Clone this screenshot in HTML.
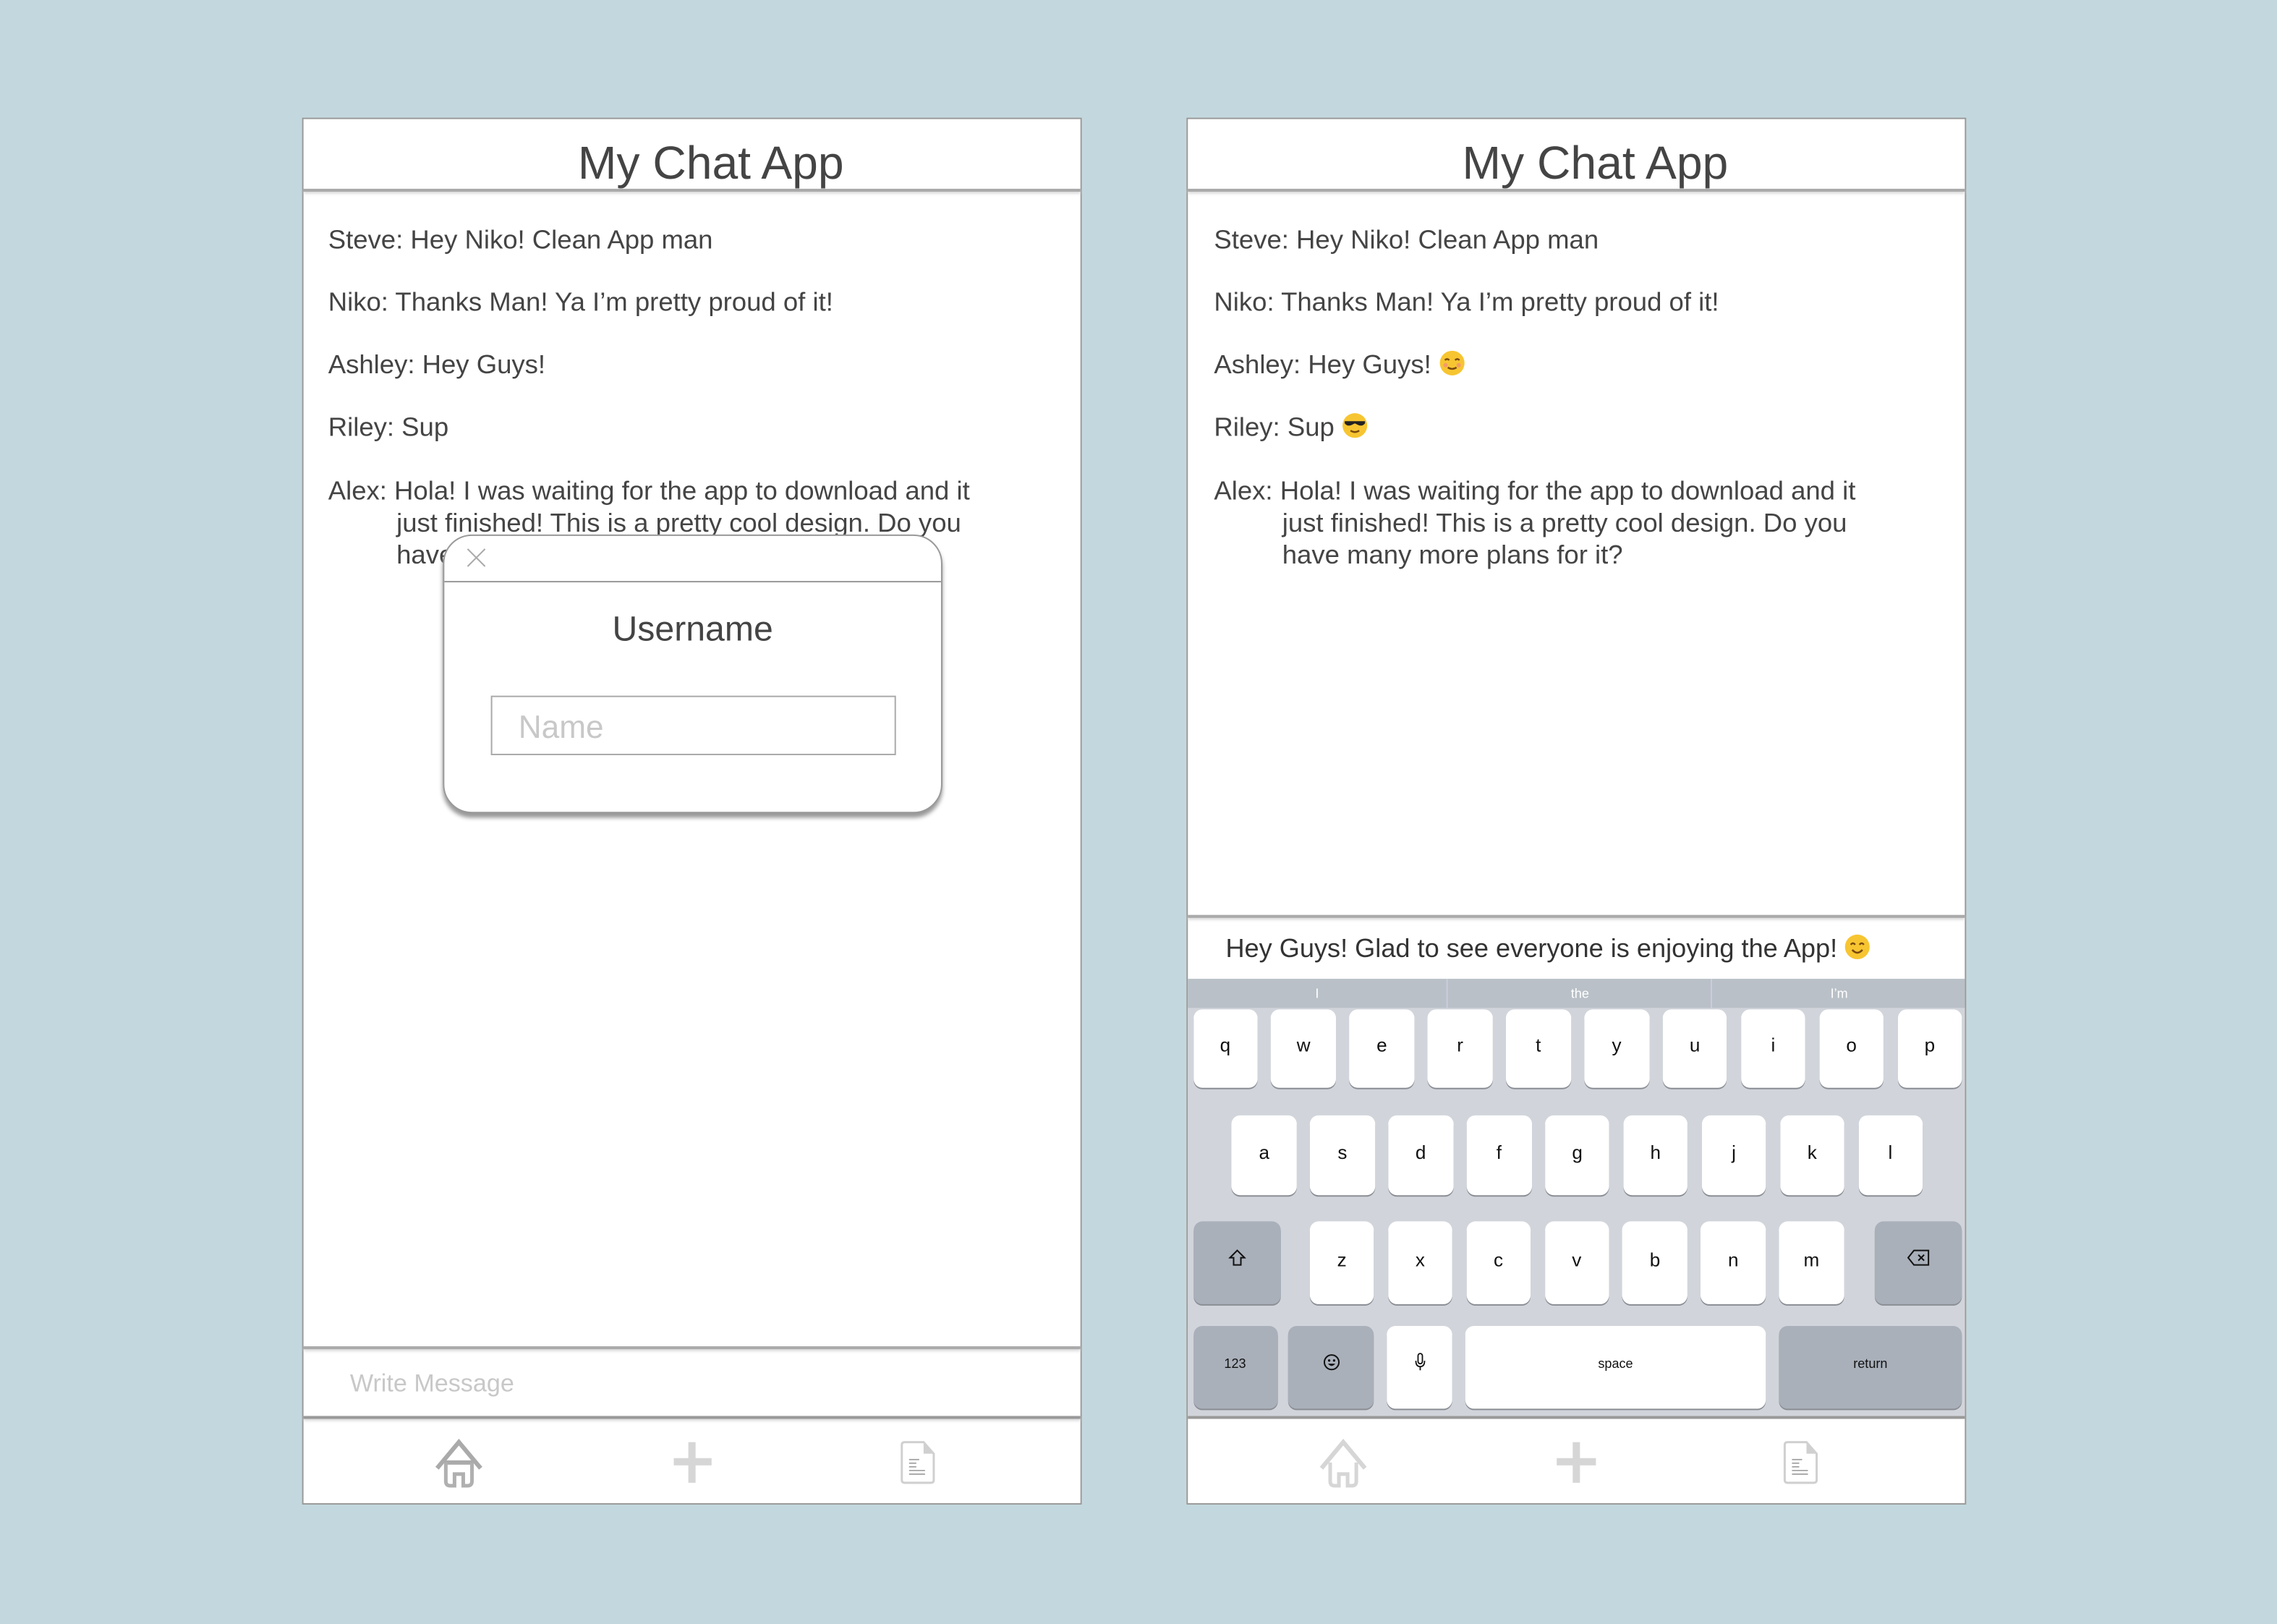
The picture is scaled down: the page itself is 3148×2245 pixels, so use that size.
<!DOCTYPE html>
<html><head><meta charset="utf-8">
<style>
html,body{margin:0;padding:0;background:#c3d8de;overflow:hidden;width:3148px;height:2245px;}
#wrap{position:relative;width:3148px;height:2245px;overflow:hidden;}
#s{position:absolute;left:0;top:0;width:1568px;height:1118px;transform:scale(2.00765);transform-origin:0 0;font-family:"Liberation Sans",sans-serif;color:#444;}
.a{position:absolute;}
.phone{position:absolute;top:81px;width:537px;height:955px;background:#fff;border:1px solid #999;box-sizing:border-box;}
.title{position:absolute;top:12px;left:0;width:100%;text-align:center;font-size:32px;color:#444;padding-left:26px;box-sizing:border-box;}
.hline{position:absolute;left:0;width:100%;height:2px;background:#aaa;box-shadow:0 1px 2px #ccc;}
.msg{position:absolute;left:17px;font-size:18.2px;color:#444;line-height:22px;white-space:nowrap;}
.ind{padding-left:47px;}
.key{position:absolute;background:#fff;border-radius:6px;box-shadow:0 1px 0 #8a8e94;font-size:13px;color:#111;text-align:center;}
.dk{background:#a9b0ba;}
.sug{position:absolute;top:0;height:20px;font-size:9px;color:#fff;text-align:center;line-height:20px;}
</style></head><body>
<div id="wrap">
<div id="s">

<div class="phone" style="left:208px;">
  <div class="title">My Chat App</div>
  <div class="hline" style="top:48px;"></div>
  <div class="msg" style="top:72px;">Steve: Hey Niko! Clean App man</div>
  <div class="msg" style="top:115px;">Niko: Thanks Man! Ya I’m pretty proud of it!</div>
  <div class="msg" style="top:158px;">Ashley: Hey Guys!</div>
  <div class="msg" style="top:201px;">Riley: Sup</div>
  <div class="msg" style="top:245px;">Alex: Hola! I was waiting for the app to download and it<br><span class="ind">just finished! This is a pretty cool design. Do you</span><br><span class="ind">have many more plans for it?</span></div>

  <div class="a" style="left:96px;top:286px;width:344px;height:192px;background:#fff;border:1px solid #999;border-radius:20px;box-shadow:0 3px 3px #999;box-sizing:border-box;">
    <svg class="a" style="left:15px;top:8px" width="14" height="14" viewBox="0 0 14 14"><path d="M1 1L13 13M13 1L1 13" stroke="#aaa" stroke-width="1"/></svg>
    <div class="a" style="left:0;top:31px;width:100%;height:1px;background:#999;"></div>
    <div class="a" style="left:0;top:51px;width:100%;text-align:center;font-size:24px;color:#444;">Username</div>
    <div class="a" style="left:32px;top:110px;width:279px;height:41px;border:1px solid #aaa;box-sizing:border-box;font-size:22px;color:#c8c8c8;line-height:41px;padding-left:18px;">Name</div>
  </div>

  <div class="hline" style="top:845px;"></div>
  <div class="a" style="left:32px;top:861px;font-size:17px;color:#c8c8c8;">Write Message</div>
  <div class="hline" style="top:893px;background:#999;"></div>
  <svg class="a" style="left:90px;top:908px" width="36" height="36" viewBox="0 0 36 36"><path d="M2 21L17 3L32 21" fill="none" stroke="#aaa" stroke-width="3"/><path d="M7 17H27" stroke="#aaa" stroke-width="3"/><path d="M8 17V30Q8 33 11 33H14V25H20V33H23Q26 33 26 30V17" fill="none" stroke="#b0b0b0" stroke-width="2.5"/></svg>
  <div class="a" style="left:255px;top:922px;width:26px;height:5px;background:#d6d6d6;"></div>
  <div class="a" style="left:265px;top:911px;width:5px;height:28px;background:#d6d6d6;"></div>
  <svg class="a" style="left:411px;top:910px" width="24" height="30" viewBox="0 0 24 30"><path d="M3 1H16L23 9V27Q23 29 21 29H3Q1 29 1 27V3Q1 1 3 1Z" fill="#fff" stroke="#d0d0d0" stroke-width="1.5"/><path d="M16 1V9H23Z" fill="#d0d0d0"/><path d="M6 13H13M6 15.5H11M6 18H11M6 20.5H17M6 23H17" stroke="#999" stroke-width="0.8"/></svg>
</div>

<div class="phone" style="left:817px;">
  <div class="title">My Chat App</div>
  <div class="hline" style="top:48px;"></div>
  <div class="msg" style="top:72px;left:18px;">Steve: Hey Niko! Clean App man</div>
  <div class="msg" style="top:115px;left:18px;">Niko: Thanks Man! Ya I’m pretty proud of it!</div>
  <div class="msg" style="top:158px;left:18px;">Ashley: Hey Guys! <svg width="18" height="18" viewBox="0 0 18 18" style="vertical-align:-2px"><circle cx="9" cy="9" r="8.5" fill="#f7c531"/><path d="M4 7Q5.5 5.5 7 7M11 7Q12.5 5.5 14 7" stroke="#7a4a10" stroke-width="1.2" fill="none"/><path d="M6 12Q9 14 12 12" stroke="#7a4a10" stroke-width="1.2" fill="none"/><circle cx="4.5" cy="10.5" r="1.5" fill="#f49a6a"/><circle cx="13.5" cy="10.5" r="1.5" fill="#f49a6a"/></svg></div>
  <div class="msg" style="top:201px;left:18px;">Riley: Sup <svg width="18" height="18" viewBox="0 0 18 18" style="vertical-align:-2px"><circle cx="9" cy="9" r="8.5" fill="#f7c531"/><path d="M2 6H16V7.5Q14 10 11 8.5L9 7.5L7 8.5Q4 10 2 7.5Z" fill="#222"/><path d="M6 12.5Q9 14.5 12 12.5" stroke="#7a4a10" stroke-width="1.2" fill="none"/></svg></div>
  <div class="msg" style="top:245px;left:18px;">Alex: Hola! I was waiting for the app to download and it<br><span class="ind">just finished! This is a pretty cool design. Do you</span><br><span class="ind">have many more plans for it?</span></div>

  <div class="hline" style="top:548px;"></div>
  <div class="a" style="left:26px;top:561px;font-size:18px;color:#333;white-space:nowrap;">Hey Guys! Glad to see everyone is enjoying the App! <svg width="18" height="18" viewBox="0 0 18 18" style="vertical-align:-2px"><circle cx="9" cy="9" r="8.5" fill="#f7c531"/><path d="M4.5 7.5Q6 5.5 7.5 7.5M10.5 7.5Q12 5.5 13.5 7.5" stroke="#7a4a10" stroke-width="1.2" fill="none"/><path d="M5.5 11Q9 15 12.5 11" stroke="#7a4a10" stroke-width="1.3" fill="none"/></svg></div>

  <div class="a" style="left:0;top:592px;width:535px;height:301px;background:#d1d5db;">
    <div class="a" style="left:0;top:0;width:100%;height:20px;background:#b9c0c7;"></div>
    <div class="sug" style="left:0;width:178px;">I</div>
    <div class="sug" style="left:178px;width:182px;border-left:1px solid #ccd;">the</div>
    <div class="sug" style="left:360px;width:175px;border-left:1px solid #ccd;">I’m</div>
  </div>
  <div class="a" style="left:0;top:893px;width:100%;height:2px;background:#999;"></div>
  <svg class="a" style="left:90px;top:908px" width="36" height="36" viewBox="0 0 36 36"><path d="M2 21L17 3L32 21" fill="none" stroke="#d6d6d6" stroke-width="3"/><path d="M8 17V30Q8 33 11 33H14V25H20V33H23Q26 33 26 30V17" fill="none" stroke="#d6d6d6" stroke-width="2.5"/></svg>
  <div class="a" style="left:254px;top:922px;width:27px;height:5px;background:#d6d6d6;"></div>
  <div class="a" style="left:265px;top:911px;width:5px;height:28px;background:#d6d6d6;"></div>
  <svg class="a" style="left:410px;top:910px" width="24" height="30" viewBox="0 0 24 30"><path d="M3 1H16L23 9V27Q23 29 21 29H3Q1 29 1 27V3Q1 1 3 1Z" fill="#fff" stroke="#d0d0d0" stroke-width="1.5"/><path d="M16 1V9H23Z" fill="#d0d0d0"/><path d="M6 13H13M6 15.5H11M6 18H11M6 20.5H17M6 23H17" stroke="#999" stroke-width="0.8"/></svg>
</div>

</div>
</div>
<script>
(function(){
var s=document.getElementById('s');
function k(x,y,w,h,t,dark,fs){var d=document.createElement('div');d.className='key'+(dark?' dk':'');d.style.left=x+'px';d.style.top=y+'px';d.style.width=w+'px';d.style.height=h+'px';d.style.lineHeight=(h-4)+'px';if(fs)d.style.fontSize=fs+'px';d.innerHTML=t;s.appendChild(d);}
var r1='qwertyuiop',r2='asdfghjkl',r3='zxcvbnm';
for(var i=0;i<10;i++)k(821.5+i*53.9,695,44.5,54,r1[i]);
for(i=0;i<9;i++)k(848.3+i*53.9,768,44.5,55,r2[i]);
for(i=0;i<7;i++)k(901.8+i*53.9,841,44.5,57,r3[i]);
k(821.5,841,60,57,'<svg width="12" height="12" viewBox="0 0 12 12"><path d="M6 1L11 6H8.5V11H3.5V6H1Z" fill="none" stroke="#111" stroke-width="1"/></svg>',1);
k(1291,841,60,57,'<svg width="16" height="12" viewBox="0 0 16 12"><path d="M5 1H15V11H5L1 6Z" fill="none" stroke="#111" stroke-width="1"/><path d="M8 4L12 8M12 4L8 8" stroke="#111" stroke-width="1"/></svg>',1);
k(821.5,913,58,57,'123',1,9);
k(887,913,59,57,'<svg width="12" height="12" viewBox="0 0 12 12"><circle cx="6" cy="6" r="5" fill="none" stroke="#111"/><circle cx="4.3" cy="4.8" r=".8"/><circle cx="7.7" cy="4.8" r=".8"/><path d="M3.5 7Q6 10 8.5 7Z" fill="#111"/></svg>',1);
k(955,913,45,57,'<svg width="8" height="13" viewBox="0 0 8 13"><rect x="2.5" y="1" width="3" height="7" rx="1.5" fill="none" stroke="#111" stroke-width=".9"/><path d="M1 6Q1 10 4 10Q7 10 7 6M4 10V12.5" fill="none" stroke="#111" stroke-width=".9"/></svg>');
k(1009,913,207,57,'space',0,9);
k(1225,913,126,57,'return',1,9);
})();
</script>
</body></html>
